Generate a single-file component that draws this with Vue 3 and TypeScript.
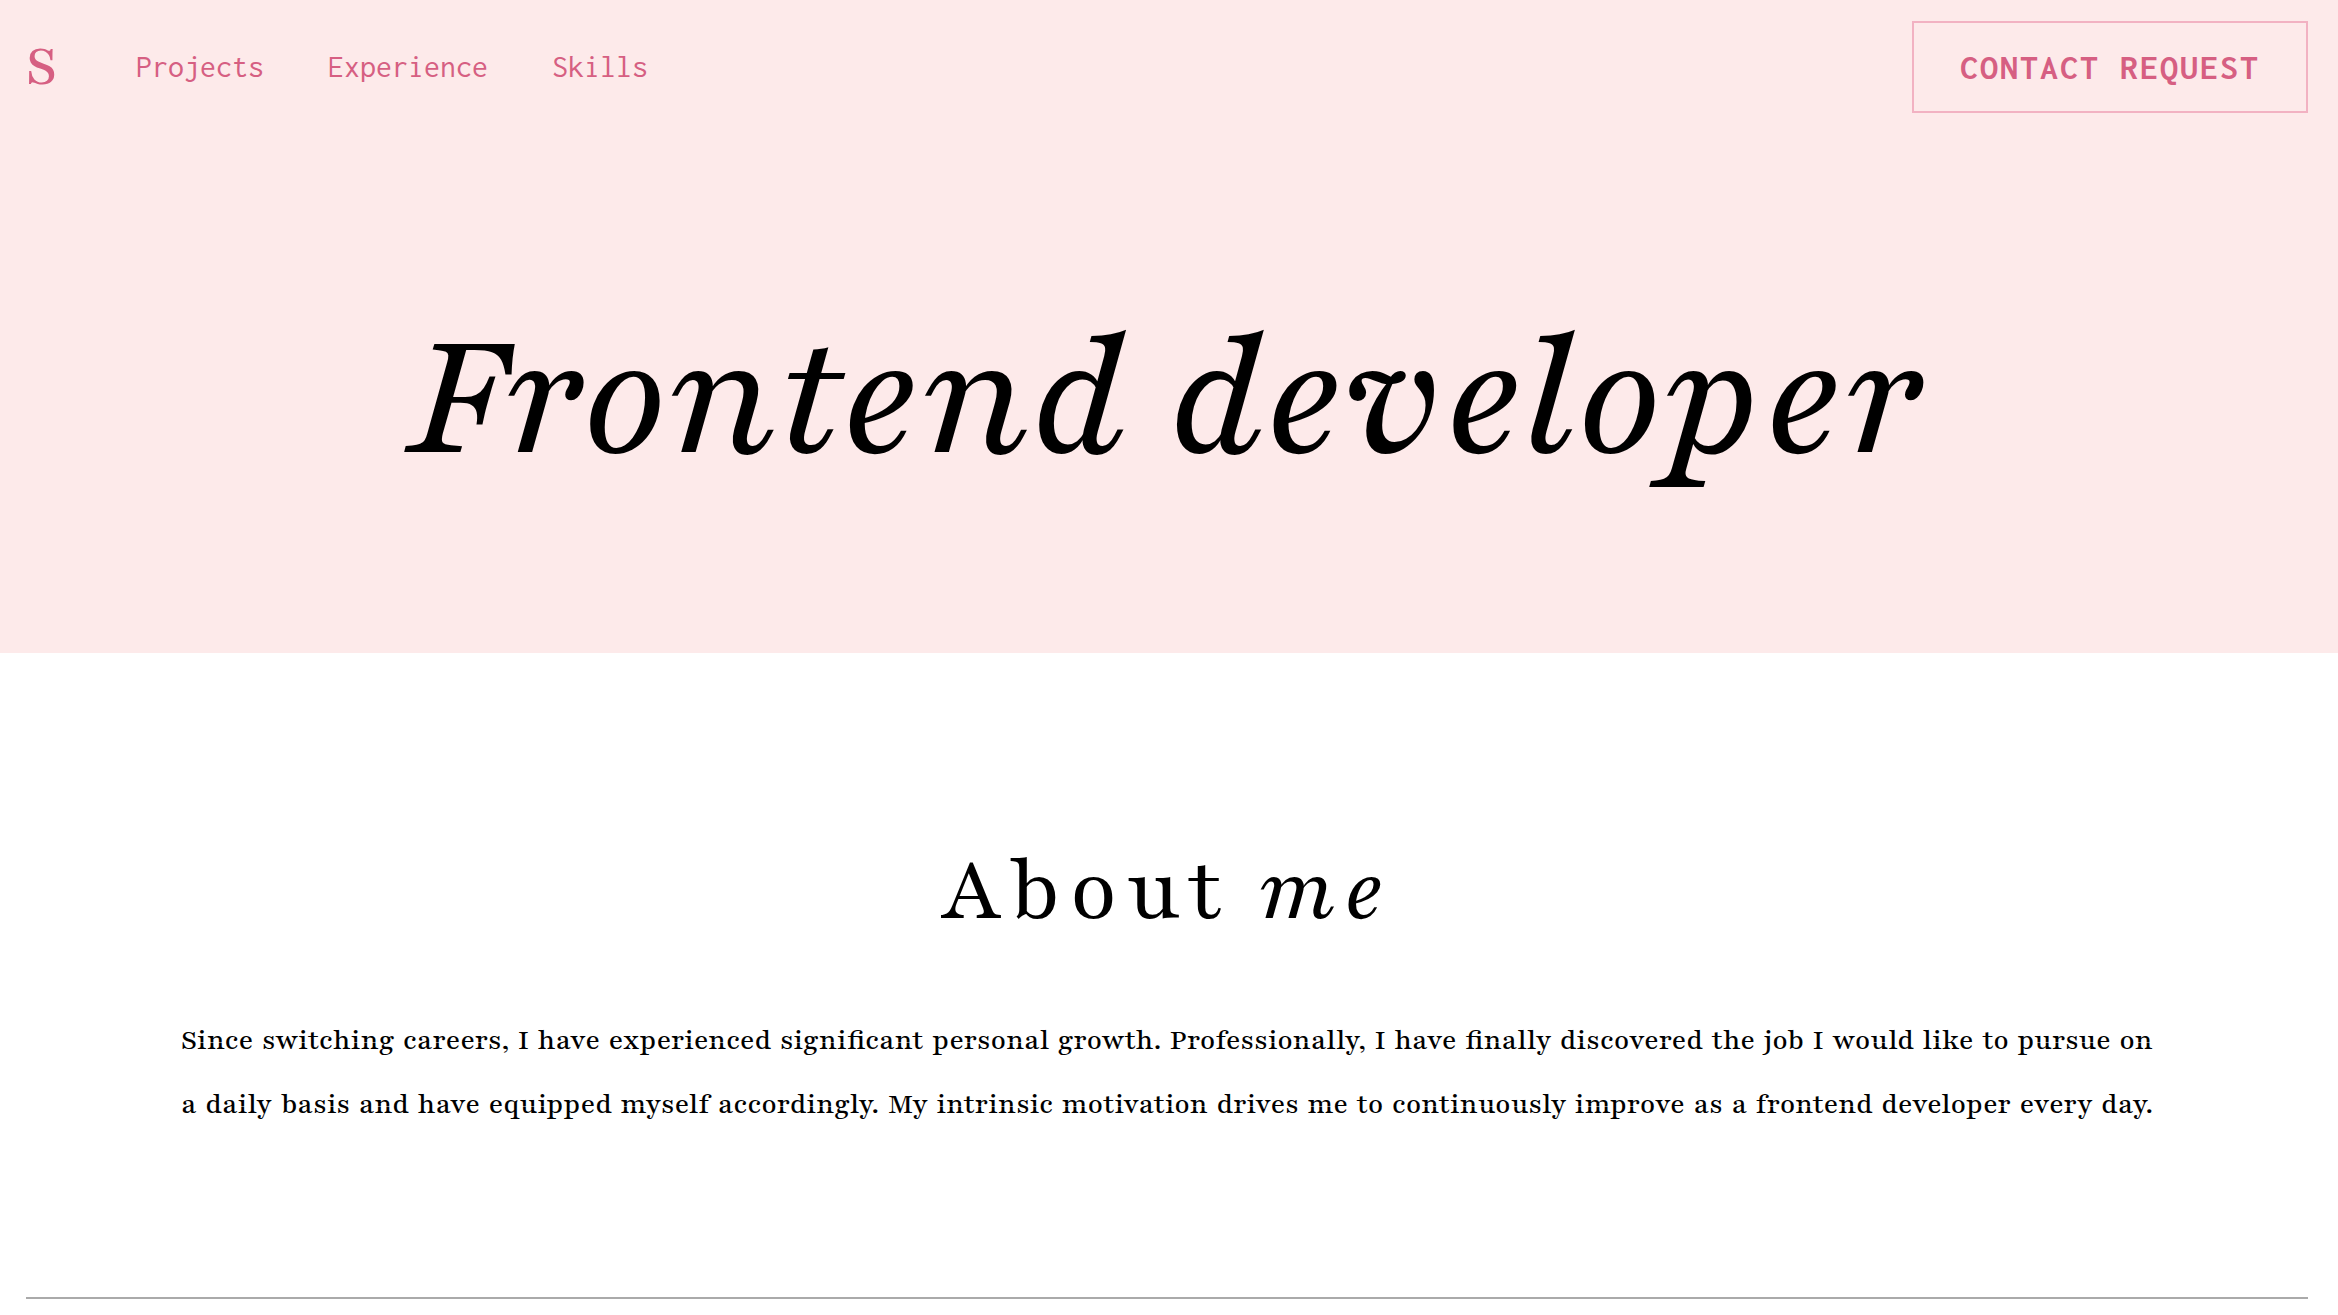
<script setup lang="ts">
interface NavLink {
  label: string
  href: string
}

const links: NavLink[] = [
  { label: 'Projects', href: '#projects' },
  { label: 'Experience', href: '#experience' },
  { label: 'Skills', href: '#skills' },
]
</script>

<template>
  <div class="page">
    <div class="hero">
      <header class="header">
        <a class="logo" href="#top">S</a>
        <nav class="nav" aria-label="Main">
          <a v-for="link in links" :key="link.href" :href="link.href">{{ link.label }}</a>
        </nav>
        <button class="contact" type="button">CONTACT REQUEST</button>
      </header>
      <h1 class="title">Frontend developer</h1>
    </div>

    <main class="content">
      <section class="about">
        <h2 class="heading">About <em>me</em></h2>
        <p class="text">
          Since switching careers, I have experienced significant personal growth. Professionally, I
          have finally discovered the job I would like to pursue on a&nbsp;daily basis and have
          equipped myself accordingly. My intrinsic motivation drives me to continuously improve as
          a frontend developer every day.
        </p>
      </section>
    </main>
  </div>
</template>

<style>
body {
  margin: 0;
  background: #ffffff;
}
</style>

<style scoped>
.page {
  font-family: Playfair, "Liberation Serif", serif;
  color: #000000;
}

.hero {
  padding-bottom: 131px;
  background: #fdeaea;
}

.header {
  display: flex;
  align-items: center;
  padding: 21px 30px 21px 26px;
}

.logo {
  width: 110px;
  font-size: 60px;
  font-weight: 500;
  line-height: 64px;
  color: #d65f82;
  text-decoration: none;
}

.nav {
  display: flex;
  flex: 1;
  gap: 64px;
  font-family: Inconsolata, "Liberation Mono", monospace;
  font-size: 32px;
  line-height: 40px;
}

.nav a {
  color: #d65f82;
  text-decoration: none;
}

.contact {
  height: 92px;
  padding: 0 46px;
  border: 2px solid #f2b2c2;
  background: transparent;
  font-family: Inconsolata, "Liberation Mono", monospace;
  font-size: 36px;
  font-weight: 700;
  letter-spacing: 2px;
  color: #d65f82;
}

.title {
  margin: 0;
  padding: 140px 30px 0 26px;
  font-size: 190px;
  font-style: italic;
  font-weight: 400;
  line-height: 248px;
  text-align: center;
}

.content {
  padding: 0 30px 0 26px;
}

.about {
  padding: 174px 155px 160px;
  border-bottom: 2px solid #aaaaaa;
}

.heading {
  margin: 0 0 54px;
  font-size: 96px;
  font-weight: 400;
  line-height: 128px;
  letter-spacing: 8px;
  text-align: center;
}

.text {
  margin: 0;
  font-size: 31px;
  font-weight: 500;
  line-height: 64px;
  text-align: justify;
  text-align-last: justify;
}
</style>
